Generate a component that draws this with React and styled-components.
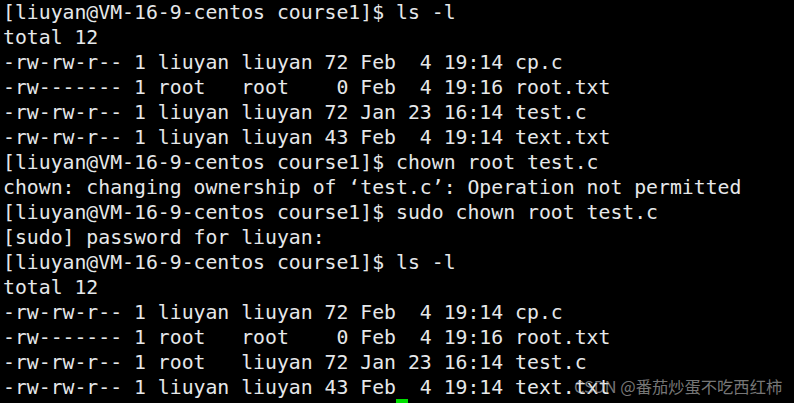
import styled, { createGlobalStyle } from "styled-components";

const GlobalStyle = createGlobalStyle`
  html, body {
    margin: 0;
    padding: 0;
    background: #000;
  }
`;

const PROMPT = "[liuyan@VM-16-9-centos course1]$ ";

const lines = [
  PROMPT + "ls -l",
  "total 12",
  "-rw-rw-r-- 1 liuyan liuyan 72 Feb  4 19:14 cp.c",
  "-rw------- 1 root   root    0 Feb  4 19:16 root.txt",
  "-rw-rw-r-- 1 liuyan liuyan 72 Jan 23 16:14 test.c",
  "-rw-rw-r-- 1 liuyan liuyan 43 Feb  4 19:14 text.txt",
  PROMPT + "chown root test.c",
  "chown: changing ownership of \u2018test.c\u2019: Operation not permitted",
  PROMPT + "sudo chown root test.c",
  "[sudo] password for liuyan:",
  PROMPT + "ls -l",
  "total 12",
  "-rw-rw-r-- 1 liuyan liuyan 72 Feb  4 19:14 cp.c",
  "-rw------- 1 root   root    0 Feb  4 19:16 root.txt",
  "-rw-rw-r-- 1 root   liuyan 72 Jan 23 16:14 test.c",
  "-rw-rw-r-- 1 liuyan liuyan 43 Feb  4 19:14 text.txt",
];

const App = () => {
  return (
    <>
      <GlobalStyle />
      <Terminal>
        {lines.map((line, i) => (
          <Line key={i}>{line}</Line>
        ))}
        <Line>
          {PROMPT}
          <Cursor />
        </Line>
        <Watermark>CSDN @番茄炒蛋不吃西红柿</Watermark>
      </Terminal>
    </>
  );
};

const Terminal = styled.div`
  position: relative;
  width: 794px;
  height: 403px;
  overflow: hidden;
  background: #000;
  padding: 0 0 0 3px;
  box-sizing: border-box;
  font-family: "DejaVu Sans Mono", "Liberation Mono", monospace;
  font-size: 19.8px;
  color: #e6e8ea;
`;

const Line = styled.div`
  height: 25px;
  line-height: 25px;
  white-space: pre;
  display: flex;
  align-items: stretch;
`;

const Cursor = styled.span`
  display: inline-block;
  width: 12px;
  height: 25px;
  background: #00e000;
  margin-top: -1px;
`;

const Watermark = styled.div`
  position: absolute;
  left: 574px;
  top: 375px;
  font-family: "Noto Sans CJK SC", "Noto Sans", sans-serif;
  font-size: 16.3px;
  line-height: 22px;
  color: rgba(200, 200, 200, 0.6);
  white-space: nowrap;
`;

export default App;
